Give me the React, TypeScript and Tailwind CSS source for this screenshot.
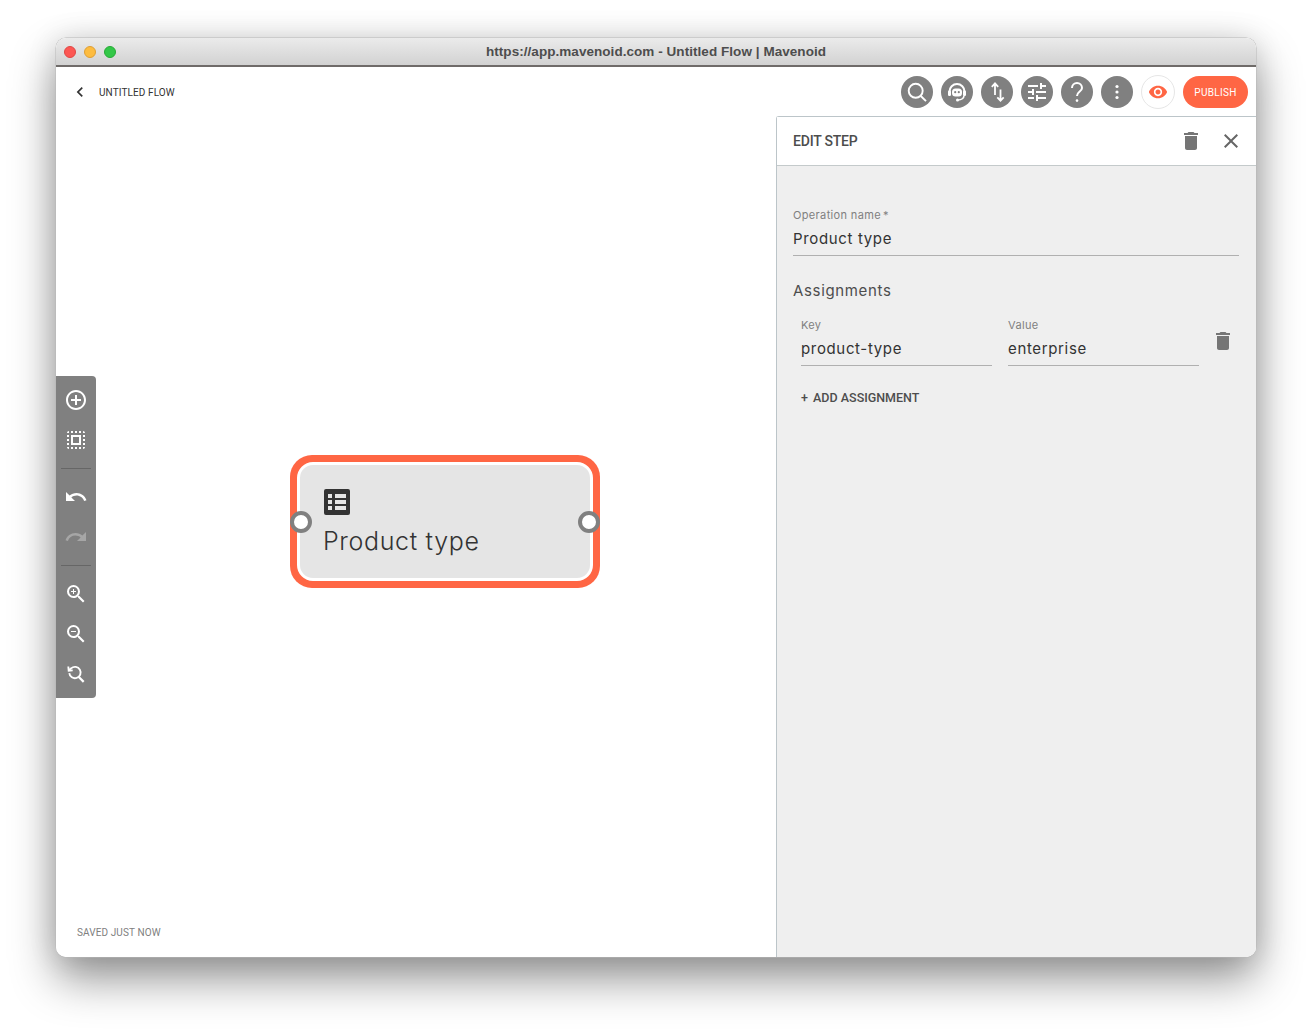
import React from "react";
import {
  MdAddCircleOutline,
  MdClose,
  MdDelete,
  MdRedo,
  MdSelectAll,
  MdTune,
  MdUndo,
  MdVisibility,
  MdZoomIn,
  MdZoomOut,
  MdChevronLeft,
} from "react-icons/md";

const mono = "font-['Inter',sans-serif]";
const roboto = "font-['Roboto',sans-serif]";
const liberation = "font-['Liberation_Sans',sans-serif]";

const SearchIcon = () => (
  <svg width="24" height="24" viewBox="0 0 24 24" fill="none" stroke="white" strokeWidth="1.9">
    <circle cx="10.7" cy="10.8" r="7" />
    <path d="m15.8 16 5.2 5.2" />
  </svg>
);

const AgentIcon = () => (
  <svg width="24" height="24" viewBox="0 0 24 24" fill="none">
    <path d="M4.5 15V11.5a7.5 7.5 0 0 1 15 0V15" stroke="white" strokeWidth="2" />
    <rect x="3" y="10.5" width="3" height="5.5" rx="1.2" fill="white" />
    <rect x="18" y="10.5" width="3" height="5.5" rx="1.2" fill="white" />
    <path d="M19 15.5c0 2.6-2.4 4.5-6 4.5" stroke="white" strokeWidth="1.6" />
    <circle cx="12.5" cy="20" r="1.5" fill="white" />
    <rect x="7" y="8.5" width="10" height="8" rx="3.5" fill="white" />
    <circle cx="10.2" cy="12.2" r="1.1" fill="#808080" />
    <circle cx="13.8" cy="12.2" r="1.1" fill="#808080" />
  </svg>
);

const SortIcon = () => (
  <svg width="24" height="24" viewBox="0 0 24 24" fill="none" stroke="white" strokeWidth="1.8">
    <path d="M10 15V3.8M6.8 6.8 10 3.4l3.2 3.4" />
    <path d="M15.5 9.5v11M12.3 17.3l3.2 3.4 3.2-3.4" />
  </svg>
);

const HelpIcon = () => (
  <svg width="24" height="24" viewBox="0 0 24 24" fill="none" stroke="white" strokeWidth="2">
    <path d="M7 8a5 5 0 0 1 10 0c0 3.6-5 3.6-5 8" />
    <circle cx="12" cy="20.6" r="1.3" fill="white" stroke="none" />
  </svg>
);

const DotsIcon = () => (
  <svg width="24" height="24" viewBox="0 0 24 24" fill="white">
    <circle cx="12" cy="6.5" r="1.6" />
    <circle cx="12" cy="12" r="1.6" />
    <circle cx="12" cy="17.5" r="1.6" />
  </svg>
);

const ResetZoomIcon = () => (
  <svg width="22" height="22" viewBox="0 0 24 24" fill="none" stroke="white" strokeWidth="2">
    <path d="M4.7 11a6.2 6.2 0 1 0 2-5.2L4.6 7.6" />
    <path d="M3.6 3.8 4 8.4l4.4-.3" fill="none" />
    <path d="m14.8 15 5.6 5.6" strokeWidth="2.4" />
  </svg>
);

const TableIcon = () => (
  <svg width="26" height="26" viewBox="0 0 26 26" fill="#333333">
    <path
      fillRule="evenodd"
      d="M2 0h22a2 2 0 0 1 2 2v22a2 2 0 0 1-2 2H2a2 2 0 0 1-2-2V2a2 2 0 0 1 2-2zM4 5v4h4V5zm7 0v4h11V5zM4 11v4h4v-4zm7 0v4h11v-4zM4 17v4h4v-4zm7 0v4h11v-4z"
    />
  </svg>
);

const TopButton: React.FC<{ children: React.ReactNode }> = ({ children }) => (
  <div className="w-8 h-8 rounded-full bg-[#808080] flex items-center justify-center text-white">
    {children}
  </div>
);

const ToolButton: React.FC<{ children: React.ReactNode; className?: string }> = ({ children, className }) => (
  <div className={"h-10 flex items-center justify-center " + (className || "")}>{children}</div>
);

const Field: React.FC<{ label: React.ReactNode; value: string; className?: string }> = ({ label, value, className }) => (
  <div className={className}>
    <div className={`${mono} text-[11px] leading-[14px] tracking-[0.35px] text-[#808080]`}>{label}</div>
    <div className={`${mono} text-[15px] leading-[20px] tracking-[0.65px] text-[#333333] mt-[7px] pb-[6px] border-b border-[#b0b0b0]`}>
      {value}
    </div>
  </div>
);

export default function App() {
  return (
    <div className="w-[1312px] h-[1031px] bg-white pl-[56px] pt-[38px] overflow-hidden">
      <div className="w-[1200px] h-[919px] rounded-[10px] shadow-[0_0_0_0.5px_#b8b8b8,0_22px_45px_rgba(0,0,0,0.42),0_0_30px_rgba(0,0,0,0.12)]">
        <div className="relative w-full h-full rounded-[10px] bg-white flex flex-col overflow-hidden">
          <div className="h-[29px] shrink-0 relative flex items-center justify-center bg-gradient-to-b from-[#ebebeb] to-[#d2d2d2] border-b-2 border-[#6f6b69]">
            <div className="absolute left-[8px] top-[8px] flex gap-2">
              <div className="w-3 h-3 rounded-full bg-[#fc5753] border-[0.5px] border-[#df4744]" />
              <div className="w-3 h-3 rounded-full bg-[#fdbc40] border-[0.5px] border-[#de9f34]" />
              <div className="w-3 h-3 rounded-full bg-[#33c748] border-[0.5px] border-[#27aa35]" />
            </div>
            <div className={`${liberation} font-bold text-[13.5px] text-[#4d4d4d] tracking-[0.05px] mt-[2px]`}>
              https://app.mavenoid.com - Untitled Flow | Mavenoid
            </div>
          </div>

          <div className="flex-1 relative flex min-h-0">
            <div className="flex-1 flex flex-col min-w-0">
              <div className="h-[49px] flex items-center pl-[14px]">
                <MdChevronLeft size={20} color="#333333" />
                <div className={`${roboto} ml-[9px] mt-[2px] text-[10px] tracking-[0.1px] text-[#333333]`}>UNTITLED FLOW</div>
              </div>
              <div className="flex-1" />
              <div className={`${roboto} pl-[21px] pb-[17px] text-[10px] leading-[14px] tracking-[0.1px] text-[#808080]`}>
                SAVED JUST NOW
              </div>
            </div>

            <div className="w-[480px] shrink-0 flex flex-col">
              <div className="h-[49px] flex items-center justify-end pr-2 gap-2">
                <TopButton>
                  <SearchIcon />
                </TopButton>
                <TopButton>
                  <AgentIcon />
                </TopButton>
                <TopButton>
                  <SortIcon />
                </TopButton>
                <TopButton>
                  <MdTune size={24} />
                </TopButton>
                <TopButton>
                  <HelpIcon />
                </TopButton>
                <TopButton>
                  <DotsIcon />
                </TopButton>
                <div className="w-[34px] h-[34px] rounded-full bg-white border border-[#e6e6e6] flex items-center justify-center">
                  <MdVisibility size={20} color="#ff6644" />
                </div>
                <div className={`${roboto} w-[65px] h-8 pt-[2px] rounded-full bg-[#ff6644] flex items-center justify-center text-white text-[10px] tracking-[0.3px]`}>
                  PUBLISH
                </div>
              </div>

              <div className="flex-1 flex flex-col bg-[#efefef] border-l border-t border-[#bcc5c9] rounded-tl-[3px]">
                <div className="h-[49px] shrink-0 bg-white border-b border-[#c4cacb] flex items-center pl-4 pr-[13px]">
                  <div className={`${roboto} flex-1 font-medium text-[14px] tracking-[-0.2px] text-[#4d4d4d]`}>EDIT STEP</div>
                  <MdDelete size={24} color="#757575" />
                  <MdClose size={24} color="#666666" className="ml-4" />
                </div>
                <div className="pt-[42px] pl-4 pr-[17px]">
                  <Field
                    label={
                      <span>
                        Operation name<span className="ml-[2px]">*</span>
                      </span>
                    }
                    value="Product type"
                  />
                  <div className={`${mono} mt-[25px] text-[15px] leading-[20px] tracking-[0.65px] text-[#4d4d4d]`}>Assignments</div>
                  <div className="flex mt-[17px] pl-2 gap-4">
                    <Field label="Key" value="product-type" className="w-[191px]" />
                    <Field label="Value" value="enterprise" className="w-[191px]" />
                    <MdDelete size={24} color="#757575" className="mt-[11px] -ml-1" />
                  </div>
                  <div className={`${roboto} mt-[24px] pl-2 font-medium text-[12.5px] leading-[16px] text-[#4d4d4d]`}>
                    <span className="mr-[2px]">+</span> ADD ASSIGNMENT
                  </div>
                </div>
              </div>
            </div>

            {/* toolbar floats over the canvas */}
            <div className="absolute left-0 top-[309px] w-10 h-[322px] bg-[#808080] rounded-r-[4px] flex flex-col items-center py-1">
              <ToolButton>
                <MdAddCircleOutline size={24} color="white" />
              </ToolButton>
              <ToolButton>
                <MdSelectAll size={24} color="white" />
              </ToolButton>
              <div className="w-[30px] h-px bg-[#666666] mt-2 mb-2" />
              <ToolButton>
                <MdUndo size={24} color="white" />
              </ToolButton>
              <ToolButton>
                <MdRedo size={24} color="#a6a6a6" />
              </ToolButton>
              <div className="w-[30px] h-px bg-[#666666] mt-2 mb-2" />
              <ToolButton>
                <MdZoomIn size={24} color="white" />
              </ToolButton>
              <ToolButton>
                <MdZoomOut size={24} color="white" />
              </ToolButton>
              <ToolButton>
                <ResetZoomIcon />
              </ToolButton>
            </div>

            {/* flow node on the canvas */}
            <div className="absolute left-[234px] top-[388px] w-[310px] h-[133px] rounded-[22px] bg-[#ff6644] p-[7px]">
              <div className="w-full h-full rounded-[16px] bg-[#e5e5e5] border-[3px] border-white pl-[23px] pt-[24px]">
                <div className="ml-[1px]">
                  <TableIcon />
                </div>
                <div className={`${mono} mt-[8px] font-light text-[25px] leading-[36px] tracking-[0.65px] text-[#333333]`}>Product type</div>
              </div>
              <div className="absolute left-0 top-[56px] w-[22px] h-[22px] rounded-full bg-white border-[4px] border-[#808080]" />
              <div className="absolute right-0 top-[56px] w-[22px] h-[22px] rounded-full bg-white border-[4px] border-[#808080]" />
            </div>
          </div>
        </div>
      </div>
    </div>
  );
}
